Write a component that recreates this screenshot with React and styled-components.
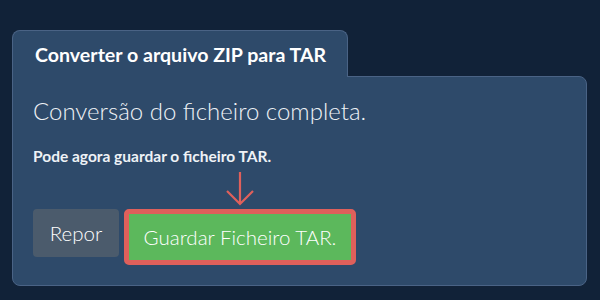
import React from "react";
import styled, { createGlobalStyle } from "styled-components";

const GlobalStyle = createGlobalStyle`
  html, body {
    margin: 0;
    padding: 0;
    background-color: #112238;
    font-family: Lato, "Open Sans", sans-serif;
  }
`;

const Page = styled.div`
  width: 600px;
  height: 300px;
  box-sizing: border-box;
  padding: 30px 13px 14px 12px;
  display: flex;
  flex-direction: column;
`;

const Tab = styled.div`
  align-self: flex-start;
  position: relative;
  z-index: 1;
  margin-bottom: -1px;
  height: 47px;
  box-sizing: border-box;
  padding: 0 21px 0 22px;
  display: flex;
  align-items: center;
  background-color: #2e4a6a;
  border: 1px solid #4a6385;
  border-bottom: none;
  border-radius: 8px 8px 0 0;
  color: #ffffff;
  font-size: 19.6px;
  font-weight: 700;
`;

const Panel = styled.div`
  flex: 1;
  background-color: #2e4a6a;
  border: 1px solid #4a6385;
  border-radius: 0 8px 8px 8px;
  padding: 19px 20px 0 20px;
  display: flex;
  flex-direction: column;
`;

const Heading = styled.h2`
  margin: 0;
  color: #eef2f6;
  font-size: 24px;
  font-weight: 300;
  line-height: 30px;
`;

const Note = styled.p`
  margin: 20px 0 0 0;
  color: #eef2f6;
  font-size: 15.5px;
  font-weight: 700;
  line-height: 20px;
`;

const Actions = styled.div`
  display: flex;
  align-items: flex-start;
  gap: 5px;
  margin-top: 43px;
`;

const Button = styled.button`
  font-family: Lato, "Open Sans", sans-serif;
  font-size: 20.5px;
  font-weight: 300;
  color: #ffffff;
  border: none;
  padding: 0;
  cursor: pointer;
`;

const ResetButton = styled(Button)`
  width: 86px;
  height: 48px;
  border-radius: 4px;
  background-color: #4b5b6c;
`;

const SaveWrap = styled.div`
  position: relative;
`;

const SaveButton = styled(Button)`
  width: 232px;
  height: 56px;
  box-sizing: border-box;
  border: 5px solid #df605b;
  border-radius: 5px;
  background-color: #5cb85c;
`;

const Arrow = styled.svg`
  position: absolute;
  left: 101px;
  top: -38px;
`;

export default function App() {
  return (
    <>
      <GlobalStyle />
      <Page>
        <Tab>Converter o arquivo ZIP para TAR</Tab>
        <Panel>
          <Heading>Conversão do ficheiro completa.</Heading>
          <Note>Pode agora guardar o ficheiro TAR.</Note>
          <Actions>
            <ResetButton>Repor</ResetButton>
            <SaveWrap>
              <Arrow width="30" height="36" viewBox="0 0 30 36">
                <path
                  d="M15 1 V33 M2 20 L15 33 L28 20"
                  fill="none"
                  stroke="#df605b"
                  strokeWidth="2.2"
                />
              </Arrow>
              <SaveButton>Guardar Ficheiro TAR.</SaveButton>
            </SaveWrap>
          </Actions>
        </Panel>
      </Page>
    </>
  );
}
